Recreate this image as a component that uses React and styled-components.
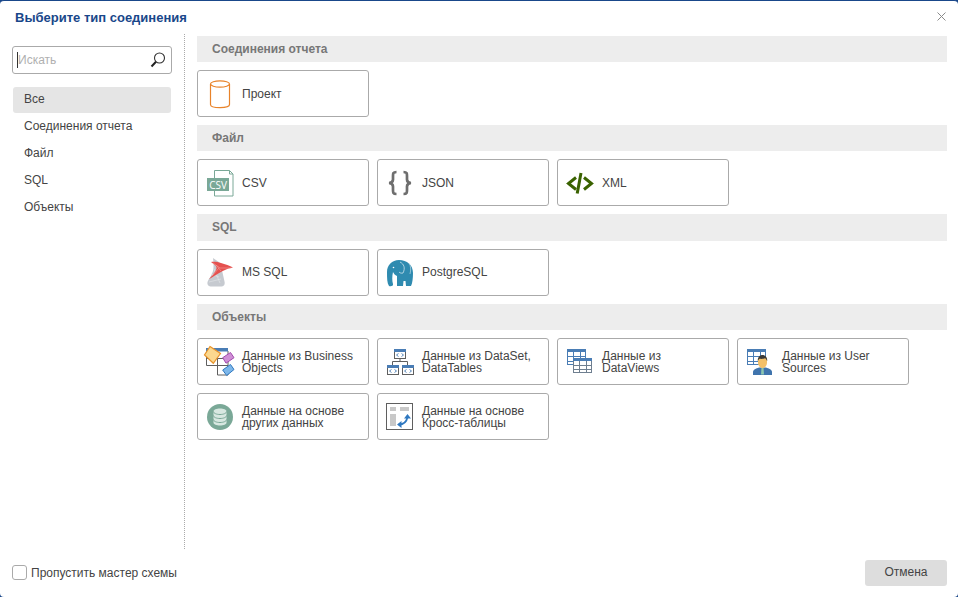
import React from 'react';
import styled, { createGlobalStyle } from 'styled-components';

const GlobalStyle = createGlobalStyle`
    html, body {
        margin: 0;
        height: 100%;
        background: #19478a;
    }
    * {
        box-sizing: border-box;
    }
    body {
        font-family: "Liberation Sans", Arial, sans-serif;
        font-size: 12px;
        color: #444;
    }
`

const Dialog = styled.div`
    height: 100vh;
    display: flex;
    flex-direction: column;
    background: #fff;
    border-top: 1px solid #19478a;
    border-radius: 4px;
    overflow: hidden;
`
const Header = styled.div`
    height: 33px;
    flex: none;
    display: flex;
    align-items: center;
    justify-content: space-between;
    padding: 0 12px 0 15px;
`
const Title = styled.div`
    font-size: 13px;
    font-weight: bold;
    color: #19478a;
`
const CloseIcon = styled.svg`
    width: 9px;
    height: 9px;
    margin-bottom: 2px;
    stroke: #8a8a8a;
    stroke-width: 1;
    fill: none;
`
const Body = styled.div`
    flex: 1;
    min-height: 0;
    display: flex;
`
const Sidebar = styled.div`
    width: 185px;
    flex: none;
    padding: 12px 12px 0 12px;
    border-right: 1px dotted #aaa;
`
const SearchBox = styled.div`
    height: 28px;
    display: flex;
    align-items: center;
    padding: 0 5px 0 4px;
    border: 1px solid #aaa;
    border-radius: 3px;
    margin-bottom: 13px;
`
const Caret = styled.span`
    width: 1px;
    height: 16px;
    flex: none;
    background: #333;
`
const SearchInput = styled.input`
    flex: 1;
    min-width: 0;
    border: none;
    outline: none;
    padding: 0;
    font: inherit;
    background: transparent;
    &::placeholder {
        color: #b0b0b0;
        opacity: 1;
    }
`
const MenuList = styled.div`
    display: flex;
    flex-direction: column;
    gap: 1px;
    margin: 0 1px;
`
const MenuItem = styled.div`
    height: 26px;
    display: flex;
    align-items: center;
    padding: 0 0 2px 11px;
    border-radius: 3px;
    background: ${props => props.$active ? '#e5e5e5' : 'transparent'};
`
const Main = styled.div`
    flex: 1;
    min-width: 0;
    padding: 1.6px 11px 0 12px;
    display: flex;
    flex-direction: column;
    gap: 8px;
`
const SectionBand = styled.div`
    height: 26.4px;
    flex: none;
    display: flex;
    align-items: center;
    padding: 0 0 0.4px 15px;
    background: #ededed;
    color: #777;
    font-weight: bold;
`
const Tiles = styled.div`
    display: flex;
    flex-wrap: wrap;
    gap: 8px;
`
const Tile = styled.div`
    width: 172px;
    height: 47px;
    display: flex;
    align-items: center;
    gap: 4px;
    padding-left: 8px;
    border: 1px solid #aaa;
    border-radius: 3px;
    background: #fff;
`
const TileIcon = styled.svg`
    width: 32px;
    height: 32px;
    flex: none;
    display: block;
    margin-top: 1px;
    overflow: visible;
`
const TileLabel = styled.div`
    line-height: 12px;
    padding-top: 0.4px;
`
const Footer = styled.div`
    height: 48px;
    flex: none;
    display: flex;
    align-items: center;
    justify-content: space-between;
    padding: 0 11px 0 12px;
`
const CheckRow = styled.label`
    display: flex;
    align-items: center;
    gap: 4px;
`
const CheckBox = styled.span`
    width: 15px;
    height: 15px;
    margin-bottom: 1px;
    border: 1px solid #aaa;
    border-radius: 3px;
    background: #fff;
`
const CancelButton = styled.button`
    width: 82px;
    height: 26px;
    padding: 0 0 2px;
    border: none;
    border-radius: 3px;
    background: #ddd;
    color: #444;
    font: inherit;
`

const SearchIcon = styled.svg`
    width: 16px;
    height: 16px;
    flex: none;
`

const BLUE = '#4a7db5';
const GRID = '#5f5f5f';

function ProjectIcon() {
    return (
        <TileIcon viewBox="0 0 32 32" fill="none" stroke="#e8832a" strokeWidth="1.200">
            <path d="M4.500 6v20.500c0 2 4 3.200 9.500 3.200s9.500-1.200 9.500-3.200v-20.500" />
            <ellipse cx="14" cy="6" rx="9.500" ry="3.200" />
        </TileIcon>
    )
}

function CsvIcon() {
    return (
        <TileIcon viewBox="0 0 32 32">
            <path d="M8.500 3.500h15l3.500 3.500v22h-18.500z" fill="#fff" stroke="#7aa897" />
            <path d="M23.500 3.500v3.500h3.500" fill="none" stroke="#7aa897" />
            <rect x="1" y="11" width="22" height="13" fill="#7aa897" />
            <text x="12" y="21.500" fontSize="10" fill="#fff" textAnchor="middle" fontFamily="'Open Sans', sans-serif">CSV</text>
        </TileIcon>
    )
}

function JsonIcon() {
    return (
        <TileIcon viewBox="0 0 32 32" fill="none" stroke="#6e6e6e" strokeWidth="2.700">
            <path d="M10.500 5c-3.500 0-3.500 1.500-3.500 4v3.500c0 2-1 3.300-4 3.500 3 .2 4 1.500 4 3.500v3.500c0 2.500 0 4 3.500 4" />
            <path d="M17.500 5c3.500 0 3.500 1.500 3.500 4v3.500c0 2 1 3.300 4 3.500-3 .2-4 1.500-4 3.500v3.500c0 2.500 0 4-3.500 4" />
        </TileIcon>
    )
}

function XmlIcon() {
    return (
        <TileIcon viewBox="0 0 32 32" fill="none" stroke="#3a6200" strokeWidth="3">
            <path d="M10 10.500l-7.500 6 7.500 6" />
            <path d="M18 10.500l7.500 6-7.500 6" />
            <path d="M15 6l-3.800 20.500" />
        </TileIcon>
    )
}

function MsSqlIcon() {
    return (
        <TileIcon viewBox="0 0 32 32">
            <path d="M7 1l6.500 4.500 3 10 2 9c.7 3-.5 5-4 5h-10c-2.500-.5-3.500-2-3-4.500 1-3 4.500-7 5.500-11 1-4 .5-8.500 0-13z" fill="#c6cad0" />
            <path d="M5 17l8 3M3 25l12-3M8 12l6 14" stroke="#dfe2e5" strokeWidth=".7" fill="none" />
            <path d="M5 5c3-.5 7 0 10 1 4 1 9 3 12 4.500-3 .5-6 1.500-8 2.500-3 1-6 3-9 5-2.500 1.500-5 3-7 4 3-3 5.500-6 7-9 1-2 .5-3-.5-4.500z" fill="#e5514f" />
            <path d="M7 6l7 5 11 0M13 11l-7 8M10 8l5 6" stroke="#f4a09c" strokeWidth=".6" fill="none" />
        </TileIcon>
    )
}

function PostgresIcon() {
    return (
        <TileIcon viewBox="0 0 32 32">
            <path d="M13 3c8 0 14 5 14 13 0 5-.5 10-2 13h-5l-.5-5h-2l-.5 5h-6v-10c-2-1-3-2-4-4-1 4-1 9 0 12 .5 2-2 2.500-4 2-2-3-2-8-2-14 0-7 5-12 12-12z" fill="#2f8bb0" />
            <path d="M14 5c4 2 5.500 6 3 11-1.500.5-3 0-4-1" fill="none" stroke="#cfe5ee" strokeWidth=".8" />
            <path d="M23 6c2 3 2 7 1 11" fill="none" stroke="#cfe5ee" strokeWidth=".6" />
            <circle cx="7.500" cy="10.500" r=".8" fill="#fff" />
        </TileIcon>
    )
}

function BusinessIcon() {
    return (
        <TileIcon viewBox="0 0 32 32">
            <path d="M.5 3v16.500h11M.5 12.500h21M11.500 5v24h10.500v-24M11.500 19.500h10.500" fill="none" stroke={GRID} />
            <rect x="0" y="2" width="22" height="3.500" fill={BLUE} />
            <path d="M4 .5l10.500 7-7.200 9.800-8.800-8.300z" fill="#fbd88f" stroke="#e8932a" strokeWidth="1.200" />
            <path d="M24.500 6.500l3.500 5.200-8 5.500-3.300-5.500z" fill="#cf8fd6" stroke="#a24bae" />
            <path d="M24.500 18.500l3.500 5-7.300 6-4-5.500z" fill="#7db7ea" stroke="#2f78c0" />
        </TileIcon>
    )
}

function MiniCode({ x, y }) {
    return (
        <g transform={`translate(${x} ${y})`}>
            <rect x=".5" y=".5" width="11" height="9" fill="#fff" stroke={GRID} />
            <rect x="0" y="0" width="12" height="3" fill={BLUE} />
            <path d="M4.500 4.500l-2 1.500 2 1.500M7.500 4.500l2 1.500-2 1.500" fill="none" stroke={BLUE} strokeWidth=".9" />
        </g>
    )
}

function DataSetIcon() {
    return (
        <TileIcon viewBox="0 0 32 32">
            <path d="M14 12v3.500M6.500 19v-3.500h15v3.500" fill="none" stroke={GRID} />
            <MiniCode x={8} y={3} />
            <MiniCode x={1} y={19} />
            <MiniCode x={16} y={19} />
        </TileIcon>
    )
}

function TableGrid({ x, y, w, h, color }) {
    const cols = [1, 2].map(i => Math.round(x + i * w / 3) + .5);
    const rows = [1, 2].map(i => Math.round(y + 3 + i * (h - 3) / 3) + .5);
    return (
        <g>
            <rect x={x + .5} y={y + .5} width={w - 1} height={h - 1} fill="#fff" stroke={color} />
            <path d={cols.map(c => `M${c} ${y}V${y + h}`).join('') + rows.map(r => `M${x} ${r}H${x + w}`).join('')} stroke={color} fill="none" />
            <rect x={x} y={y} width={w} height="3" fill={BLUE} />
        </g>
    )
}

function DataViewsIcon() {
    return (
        <TileIcon viewBox="0 0 32 32">
            <TableGrid x={1} y={3} w={19} h={16} color={BLUE} />
            <TableGrid x={7} y={12} w={19} h={15} color="#6f7f90" />
        </TileIcon>
    )
}

function UserSourcesIcon() {
    return (
        <TileIcon viewBox="0 0 32 32">
            <TableGrid x={1} y={3} w={19} h={16} color={BLUE} />
            <path d="M7 29v-3c0-2.500 3-3.500 6-4.500h7c3 1 6 2 6 4.500v3z" fill="#3f74ad" />
            <path d="M15.500 21.500h2l.5 7h-3z" fill="#8cc6b0" />
            <path d="M12 14c0-2.500 2-4 4.500-4s4.500 1.500 4.500 4v2.500c0 3-2 5.500-4.500 5.500s-4.500-2.500-4.500-5.500z" fill="#f3c069" />
            <path d="M11.800 15c-.3-3.500 2-6 4.700-6s5 2.500 4.700 6c-1-1.500-1.500-2.500-2.200-2.700-2 .7-4 .7-5.500.5-.7.5-1.200 1.200-1.700 2.200z" fill="#3b3a36" />
        </TileIcon>
    )
}

function OtherDataIcon() {
    return (
        <TileIcon viewBox="0 0 32 32">
            <circle cx="14" cy="16" r="13" fill="#7aa897" />
            <path d="M7.500 10.500c0-1.800 3-3 6.500-3s6.500 1.200 6.500 3v11c0 1.800-3 3-6.500 3s-6.500-1.200-6.500-3z" fill="#d8e8e1" />
            <path d="M7.500 10.500c0 1.800 3 3 6.500 3s6.500-1.200 6.500-3M7.500 14.500c0 1.800 3 3 6.500 3s6.500-1.200 6.500-3M7.500 18.500c0 1.800 3 3 6.500 3s6.500-1.200 6.500-3" fill="none" stroke="#7aa897" />
        </TileIcon>
    )
}

function CrossTabIcon() {
    return (
        <TileIcon viewBox="0 0 32 32">
            <rect x=".5" y="2.500" width="26" height="26" fill="#fff" stroke={GRID} />
            <rect x="4" y="6" width="6" height="4" fill="#c8c8c8" />
            <rect x="14" y="6" width="9" height="4" fill="#c8c8c8" />
            <rect x="4" y="13" width="6" height="12" fill="#c8c8c8" />
            <path d="M13 23.500c4.500 0 7.500-2.500 8.500-7.500" fill="none" stroke="#2f78c0" strokeWidth="1.800" />
            <path d="M18 17.500l3.500-4.500 3.500 4.500zM15.500 20l-4.500 3.500 4.500 3.500z" fill="#2f78c0" />
        </TileIcon>
    )
}

const sections = [
    { title: 'Соединения отчета', items: [[ProjectIcon, 'Проект']] },
    { title: 'Файл', items: [[CsvIcon, 'CSV'], [JsonIcon, 'JSON'], [XmlIcon, 'XML']] },
    { title: 'SQL', items: [[MsSqlIcon, 'MS SQL'], [PostgresIcon, 'PostgreSQL']] },
    {
        title: 'Объекты',
        items: [
            [BusinessIcon, 'Данные из Business Objects'],
            [DataSetIcon, <>Данные из DataSet,<br />DataTables</>],
            [DataViewsIcon, <>Данные из<br />DataViews</>],
            [UserSourcesIcon, <>Данные из User<br />Sources</>],
            [OtherDataIcon, <>Данные на основе<br />других данных</>],
            [CrossTabIcon, <>Данные на основе<br />Кросс-таблицы</>],
        ],
    },
];

const menu = ['Все', 'Соединения отчета', 'Файл', 'SQL', 'Объекты'];

export default function App() {
    return (
        <>
            <GlobalStyle />
            <Dialog>
                <Header>
                    <Title>Выберите тип соединения</Title>
                    <CloseIcon viewBox="0 0 9 9">
                        <path d="M.5.500l8 8M8.500.500l-8 8" />
                    </CloseIcon>
                </Header>
                <Body>
                    <Sidebar>
                        <SearchBox>
                            <Caret />
                            <SearchInput placeholder="Искать" />
                            <SearchIcon viewBox="0 0 16 16" fill="none">
                                <circle cx="9.500" cy="6" r="5" stroke="#333" strokeWidth="1.100" />
                                <path d="M6 9.700l-4.500 4.800" stroke="#222" strokeWidth="2" />
                            </SearchIcon>
                        </SearchBox>
                        <MenuList>
                            {menu.map((name, i) => (
                                <MenuItem key={name} $active={i === 0}>{name}</MenuItem>
                            ))}
                        </MenuList>
                    </Sidebar>
                    <Main>
                        {sections.map(section => (
                            <React.Fragment key={section.title}>
                                <SectionBand>{section.title}</SectionBand>
                                <Tiles>
                                    {section.items.map(([Icon, label], i) => (
                                        <Tile key={i}>
                                            <Icon />
                                            <TileLabel>{label}</TileLabel>
                                        </Tile>
                                    ))}
                                </Tiles>
                            </React.Fragment>
                        ))}
                    </Main>
                </Body>
                <Footer>
                    <CheckRow>
                        <CheckBox />
                        Пропустить мастер схемы
                    </CheckRow>
                    <CancelButton>Отмена</CancelButton>
                </Footer>
            </Dialog>
        </>
    )
}
